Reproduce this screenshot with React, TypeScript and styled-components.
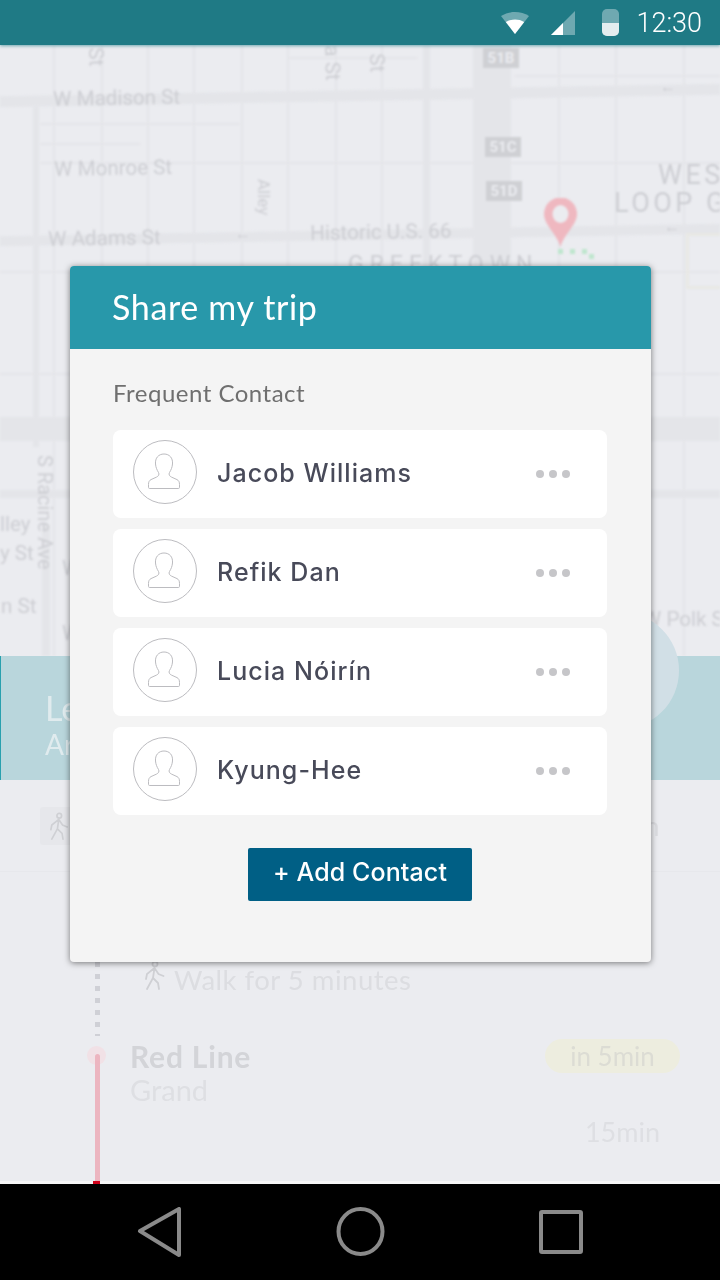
import React from "react";
import styled, { createGlobalStyle } from "styled-components";

const GlobalStyle = createGlobalStyle`
  html, body {
    margin: 0;
    padding: 0;
    background: #000;
  }
`;

const Page = styled.div`
  display: flex;
  flex-direction: column;
  position: relative;
  width: 720px;
  height: 1280px;
  overflow: hidden;
  font-family: Lato, "Liberation Sans", sans-serif;
`;

const StatusBar = styled.div`
  display: flex;
  align-items: center;
  justify-content: flex-end;
  flex: none;
  position: relative;
  z-index: 2;
  height: 45px;
  padding-right: 18px;
  background: #1f7a85;
  box-shadow: 0 1px 3px rgba(31, 122, 133, 0.6);
`;

const Clock = styled.span`
  margin-left: 17px;
  color: #fff;
  font-family: Roboto, sans-serif;
  font-size: 27px;
  font-weight: 300;
`;

const StatusIcon = styled.svg<{ $gap: number }>`
  display: block;
  margin-left: ${(p) => p.$gap}px;
`;

const Screen = styled.div`
  flex: 1;
  display: flex;
  flex-direction: column;
  position: relative;
  overflow: hidden;
  background: #ebecf0;
`;

const MapArea = styled.div`
  flex: none;
  position: relative;
  height: 611px;
  overflow: hidden;
  filter: blur(1px);
`;

const Road = styled.div<{ $x: number; $y: number; $w: number; $h: number; $angle?: number }>`
  position: absolute;
  left: ${(p) => p.$x}px;
  top: ${(p) => p.$y}px;
  width: ${(p) => p.$w}px;
  height: ${(p) => p.$h}px;
  background: #e4e5e9;
  transform: rotate(${(p) => p.$angle || 0}deg);
`;

const MapLabel = styled.span<{ $x: number; $y: number; $size?: number; $spacing?: number; $angle?: number }>`
  position: absolute;
  left: ${(p) => p.$x}px;
  top: ${(p) => p.$y}px;
  color: #cdced3;
  font-family: Roboto, sans-serif;
  font-size: ${(p) => p.$size || 20.6}px;
  line-height: 1;
  letter-spacing: ${(p) => p.$spacing || 0}px;
  white-space: nowrap;
  transform: rotate(${(p) => p.$angle || 0}deg);
  transform-origin: left top;
`;

const Shield = styled.span<{ $x: number; $y: number }>`
  position: absolute;
  left: ${(p) => p.$x}px;
  top: ${(p) => p.$y}px;
  width: 36px;
  height: 20px;
  background: #cfd0d4;
  color: #ebecf0;
  font-family: Roboto, sans-serif;
  font-size: 15px;
  font-weight: 700;
  line-height: 20px;
  text-align: center;
`;

const Building = styled.div`
  position: absolute;
  left: 686px;
  top: 188px;
  width: 50px;
  height: 50px;
  border: 3px solid #e8e8e4;
`;

const MapPin = styled.svg`
  position: absolute;
  left: 544px;
  top: 153px;
`;

const RouteDot = styled.span<{ $x: number; $y: number }>`
  position: absolute;
  left: ${(p) => p.$x}px;
  top: ${(p) => p.$y}px;
  width: 5px;
  height: 5px;
  background: #bfe6ce;
`;

const Banner = styled.div`
  flex: none;
  box-sizing: border-box;
  height: 124px;
  padding: 33px 0 0 44px;
  background: #b9d6dc;
  border-left: 1px solid #29a0ae;
  color: #e0ebee;
  filter: blur(0.7px);
`;

const BannerTitle = styled.div`
  font-size: 34px;
  line-height: 38px;
`;

const BannerSub = styled.div`
  font-size: 28px;
  line-height: 34px;
`;

const BannerCircle = styled.div`
  position: absolute;
  left: 562px;
  top: 567px;
  width: 117px;
  height: 117px;
  border-radius: 50%;
  background: #d1dfe6;
  filter: blur(0.6px);
`;

const Steps = styled.div`
  flex: 1;
  display: flex;
  flex-direction: column;
  filter: blur(0.7px);
`;

const ChipRow = styled.div`
  display: flex;
  align-items: center;
  justify-content: space-between;
  flex: none;
  box-sizing: border-box;
  height: 92px;
  padding: 0 60px 0 40px;
  border-bottom: 1px solid #e7e8ec;
`;

const WalkChip = styled.div`
  display: flex;
  align-items: center;
  justify-content: center;
  width: 38px;
  height: 38px;
  border-radius: 3px;
  background: #e6e7eb;
`;

const Leg = styled.div<{ $height: number; $top: number }>`
  display: flex;
  flex: none;
  height: ${(p) => p.$height}px;
  margin-top: ${(p) => p.$top}px;
`;

const Rail = styled.div`
  display: flex;
  flex-direction: column;
  align-items: flex-start;
  flex: none;
  position: relative;
  box-sizing: border-box;
  width: 130px;
  padding-left: 95px;
`;

const DottedLine = styled.div`
  width: 4.5px;
  height: 74px;
  margin-top: 2px;
  background: repeating-linear-gradient(to bottom, #cfd0d6 0 5px, transparent 5px 12px);
`;

const RedLine = styled.div`
  flex: 1;
  position: relative;
  z-index: 1;
  width: 5px;
  margin-top: 6px;
  border-radius: 3px 3px 0 0;
  background: #ecb5c0;
`;

const RedDot = styled.div`
  position: absolute;
  left: 87px;
  top: -2px;
  width: 19px;
  height: 19px;
  border-radius: 50%;
  background: #f1e1e6;
`;

const WalkInfo = styled.div`
  display: flex;
  align-items: flex-start;
  gap: 9px;
  margin-left: 14px;
`;

const WalkText = styled.span`
  color: #dcdde1;
  font-size: 27.5px;
  line-height: 40px;
  letter-spacing: 0.5px;
`;

const LineInfo = styled.div`
  display: flex;
  flex-direction: column;
  flex: 1;
  margin-top: -9px;
`;

const LineTitle = styled.span`
  color: #d3d4d8;
  font-size: 30px;
  font-weight: 700;
  line-height: 34px;
  letter-spacing: 0.8px;
`;

const LineStop = styled.span`
  color: #dedfe3;
  font-size: 29px;
  line-height: 34px;
`;

const Timing = styled.div`
  display: flex;
  flex-direction: column;
  align-items: flex-end;
  margin-top: -9px;
  padding-right: 40px;
`;

const Pill = styled.span`
  box-sizing: border-box;
  width: 135px;
  height: 34px;
  border-radius: 17px;
  background: #ededdf;
  color: #dcdcd4;
  font-size: 26px;
  line-height: 34px;
  text-align: center;
`;

const Duration = styled.span`
  margin-top: 42px;
  margin-right: 20px;
  color: #dedfe3;
  font-size: 27px;
  line-height: 34px;
`;

const BottomEdge = styled.div`
  display: flex;
  flex: none;
  height: 3px;
  padding-left: 93px;
  background: #f6f6f7;
`;

const RedTip = styled.div`
  width: 7px;
  background: #d0021b;
`;

const Modal = styled.div`
  position: absolute;
  left: 70px;
  top: 266px;
  z-index: 3;
  width: 581px;
  height: 696px;
  border-radius: 4px;
  overflow: hidden;
  background: #f4f4f4;
  box-shadow: 0 1px 6px rgba(0, 0, 0, 0.5);
`;

const ModalHeader = styled.div`
  display: flex;
  align-items: center;
  height: 83px;
  padding-left: 42px;
  padding-bottom: 2px;
  box-sizing: border-box;
  background: #2898aa;
  color: #fff;
  font-size: 34px;
  letter-spacing: 0.65px;
`;

const ModalBody = styled.div`
  display: flex;
  flex-direction: column;
  padding: 29px 44px 0 43px;
`;

const SectionLabel = styled.div`
  margin-bottom: 22px;
  color: #6f6f6f;
  font-size: 24px;
  line-height: 30px;
  letter-spacing: 0.5px;
`;

const ContactList = styled.div`
  display: flex;
  flex-direction: column;
  gap: 11px;
`;

const ContactRow = styled.div`
  display: flex;
  align-items: center;
  height: 88px;
  padding: 0 37px 3px 20px;
  box-sizing: border-box;
  border-radius: 8px;
  background: #fff;
`;

const AvatarIcon = styled.svg`
  flex: none;
  margin-bottom: 1px;
`;

const ContactName = styled.span`
  flex: 1;
  margin-left: 20px;
  color: #484a59;
  font-family: Inter, sans-serif;
  font-size: 25px;
  font-weight: 500;
  letter-spacing: 1.05px;
`;

const Dots = styled.div`
  display: flex;
  gap: 5px;
  margin-top: 2px;
`;

const Dot = styled.span`
  width: 8px;
  height: 8px;
  border-radius: 50%;
  background: #c6c6c9;
`;

const AddButton = styled.button`
  align-self: center;
  width: 224px;
  height: 53px;
  margin-top: 33px;
  padding: 0 0 5px;
  border: 0;
  border-radius: 2px;
  background: #005f85;
  color: #fff;
  font-family: Inter, sans-serif;
  font-size: 25px;
  font-weight: 500;
  letter-spacing: 0.1px;
`;

const NavBar = styled.div`
  display: grid;
  grid-template-columns: repeat(3, 1fr);
  flex: none;
  height: 96px;
  background: #000;
`;

const NavSlot = styled.div<{ $justify: string; $pad: number }>`
  display: flex;
  align-items: center;
  justify-content: ${(p) => p.$justify};
  padding: 0 ${(p) => p.$pad}px;
`;

const contacts = ["Jacob Williams", "Refik Dan", "Lucia Nóirín", "Kyung-Hee"];

const roads = [
  { x: -5, y: 45, w: 730, h: 11, angle: -1 },
  { x: -5, y: 185, w: 730, h: 10, angle: -1 },
  { x: 0, y: 372, w: 720, h: 24 },
  { x: 0, y: 445, w: 720, h: 8 },
  { x: 473, y: 0, w: 38, h: 611 },
  { x: 423, y: 0, w: 7, h: 611 },
  { x: 33, y: 62, w: 6, h: 340 },
  { x: 42, y: 480, w: 8, h: 131 },
  { x: 0, y: 328, w: 720, h: 1.5 },
  { x: 0, y: 226, w: 720, h: 1.5 },
  { x: 40, y: 78, w: 200, h: 1.5 },
  { x: 40, y: 98, w: 100, h: 1.5 },
  { x: 40, y: 117, w: 680, h: 1.5 },
  { x: 287, y: 12, w: 130, h: 1.5 },
  { x: 515, y: 30, w: 205, h: 1.5 },
  { x: 53, y: 0, w: 1.5, h: 611 },
  { x: 101, y: 0, w: 1.5, h: 611 },
  { x: 147, y: 0, w: 1.5, h: 611 },
  { x: 193, y: 0, w: 1.5, h: 611 },
  { x: 241, y: 0, w: 1.5, h: 611 },
  { x: 287, y: 0, w: 1.5, h: 611 },
  { x: 335, y: 0, w: 1.5, h: 611 },
  { x: 381, y: 0, w: 1.5, h: 611 },
  { x: 558, y: 0, w: 1.5, h: 611 },
  { x: 615, y: 0, w: 1.5, h: 611 },
  { x: 683, y: 0, w: 1.5, h: 611 },
];

const labels = [
  { text: "W Madison St", x: 53, y: 44, angle: -1 },
  { text: "W Monroe St", x: 54, y: 114, angle: -1 },
  { text: "W Adams St", x: 48, y: 184, angle: -1 },
  { text: "Historic U.S. 66", x: 310, y: 178, angle: -1 },
  { text: "GREEKTOWN", x: 348, y: 208, size: 23, spacing: 6 },
  { text: "WES", x: 658, y: 117, size: 27, spacing: 3.5 },
  { text: "LOOP G", x: 614, y: 145, size: 27, spacing: 3.5 },
  { text: "Alley", x: 272, y: 134, size: 17, angle: 90 },
  { text: "S Racine Ave", x: 55, y: 410, size: 20, angle: 90 },
  { text: "St", x: 106, y: 2, angle: 88 },
  { text: "a St", x: 342, y: 0, angle: 88 },
  { text: "St", x: 387, y: 8, angle: 88 },
  { text: "lley", x: 0, y: 469 },
  { text: "y St", x: 0, y: 498 },
  { text: "n St", x: 1, y: 551 },
  { text: "W", x: 62, y: 513 },
  { text: "W", x: 62, y: 578 },
  { text: "W Polk St", x: 643, y: 564 },
  { text: "←", x: 660, y: 34, size: 16 },
  { text: "←", x: 235, y: 181, size: 16 },
  { text: "←", x: 664, y: 174, size: 16 },
];

const shields = [
  { text: "51B", x: 483, y: 3 },
  { text: "51C", x: 485, y: 92 },
  { text: "51D", x: 486, y: 136 },
];

const routeDots = [
  { x: 558, y: 204 },
  { x: 570, y: 204 },
  { x: 582, y: 204 },
  { x: 589, y: 209 },
];

const Avatar = () => (
  <AvatarIcon width="64" height="64" viewBox="0 0 64 64" fill="none" stroke="#bcbcc0" strokeWidth="1">
    <circle cx="32" cy="32" r="31.5" />
    <path
      transform="translate(-1 0)"
      d="M23.5 24c-.5-6 3-10 8.500-10s9 4 8.500 10c-.3 3.500-1.500 6-3 8.500-1.200 2 .2 3.800 2 4.600l5.500 2.500c1.800.9 2.500 2.500 2.500 4.800v3c0 .8-.5 1.100-1.200 1.100H17.700c-.7 0-1.200-.3-1.200-1.100v-3c0-2.300.7-3.900 2.500-4.800l5.500-2.500c1.800-.8 3.200-2.600 2-4.600-1.500-2.500-2.700-5-3-8.500z"
    />
  </AvatarIcon>
);

const Walker = ({ size }: { size: number }) => (
  <svg width={size * 0.7} height={size} viewBox="0 0 21 30" fill="none" stroke="#cfd0d4" strokeWidth="1.800" strokeLinecap="round">
    <circle cx="11" cy="4" r="2.500" />
    <path d="M10.500 8 9 18l-6 11M9 18l5 5 1 6M10.500 8 3 14l-1 5M10.500 8l4 6 5 2" />
  </svg>
);

export default function App() {
  return (
    <Page>
      <GlobalStyle />
      <StatusBar>
        <StatusIcon width="28" height="22" viewBox="0 0 28 22" $gap={0}>
          <path d="M14 22 0 4c8-5.300 20-5.300 28 0z" fill="#6fa9b1" />
          <path d="M14 22 4.800 10c5.500-3.300 13-3.300 18.400 0z" fill="#fff" />
        </StatusIcon>
        <StatusIcon width="24" height="24" viewBox="0 0 24 24" $gap={22}>
          <path d="M0 24 24 0v24z" fill="#6fa9b1" />
          <path d="M0 24 12 12v12z" fill="#fff" />
        </StatusIcon>
        <StatusIcon width="17" height="27" viewBox="0 0 17 27" $gap={27}>
          <rect width="17" height="27" rx="5" fill="#6fa9b1" />
          <path d="M0 14h17v8a5 5 0 0 1-5 5H5a5 5 0 0 1-5-5z" fill="#e4edef" />
        </StatusIcon>
        <Clock>12:30</Clock>
      </StatusBar>
      <Screen>
        <MapArea>
          {roads.map((r, i) => (
            <Road key={i} $x={r.x} $y={r.y} $w={r.w} $h={r.h} $angle={r.angle} />
          ))}
          <Building />
          {labels.map((l, i) => (
            <MapLabel key={i} $x={l.x} $y={l.y} $size={l.size} $spacing={l.spacing} $angle={l.angle}>
              {l.text}
            </MapLabel>
          ))}
          {shields.map((s) => (
            <Shield key={s.text} $x={s.x} $y={s.y}>
              {s.text}
            </Shield>
          ))}
          <MapPin width="33" height="50" viewBox="0 0 33 50">
            <path d="M16.500 49C13 36 0 27 0 16a16.500 16.500 0 0 1 33 0c0 11-13 20-16.500 33z" fill="#efb8c0" />
            <ellipse cx="16.500" cy="16" rx="8" ry="9" fill="#ebecf0" />
          </MapPin>
          {routeDots.map((d) => (
            <RouteDot key={d.x} $x={d.x} $y={d.y} />
          ))}
        </MapArea>
        <Banner>
          <BannerTitle>Leave</BannerTitle>
          <BannerSub>Arrive</BannerSub>
        </Banner>
        <BannerCircle />
        <Steps>
          <ChipRow>
            <WalkChip>
              <Walker size={28} />
            </WalkChip>
            <WalkText>10min</WalkText>
          </ChipRow>
          <Leg $height={88} $top={88}>
            <Rail>
              <DottedLine />
            </Rail>
            <WalkInfo>
              <Walker size={30} />
              <WalkText>Walk for 5 minutes</WalkText>
            </WalkInfo>
          </Leg>
          <Leg $height={133} $top={0}>
            <Rail>
              <RedDot />
              <RedLine />
            </Rail>
            <LineInfo>
              <LineTitle>Red Line</LineTitle>
              <LineStop>Grand</LineStop>
            </LineInfo>
            <Timing>
              <Pill>in 5min</Pill>
              <Duration>15min</Duration>
            </Timing>
          </Leg>
          <BottomEdge>
            <RedTip />
          </BottomEdge>
        </Steps>
      </Screen>
      <NavBar>
        <NavSlot $justify="flex-start" $pad={137}>
          <svg width="46" height="50" viewBox="0 0 46 50" fill="none" stroke="#8a8a8a" strokeWidth="4" strokeLinejoin="round">
            <path d="M3 24 42 2v46z" />
          </svg>
        </NavSlot>
        <NavSlot $justify="center" $pad={0}>
          <svg width="52" height="50" viewBox="0 0 52 50" fill="none" stroke="#8a8a8a" strokeWidth="4">
            <ellipse cx="25.500" cy="24.500" rx="22" ry="22.500" />
          </svg>
        </NavSlot>
        <NavSlot $justify="flex-end" $pad={137}>
          <svg width="44" height="44" viewBox="0 0 44 44" fill="none" stroke="#8a8a8a" strokeWidth="4" strokeLinejoin="round">
            <rect x="2" y="2" width="40" height="40" rx="1" />
          </svg>
        </NavSlot>
      </NavBar>
      <Modal>
        <ModalHeader>Share my trip</ModalHeader>
        <ModalBody>
          <SectionLabel>Frequent Contact</SectionLabel>
          <ContactList>
            {contacts.map((name) => (
              <ContactRow key={name}>
                <Avatar />
                <ContactName>{name}</ContactName>
                <Dots>
                  <Dot />
                  <Dot />
                  <Dot />
                </Dots>
              </ContactRow>
            ))}
          </ContactList>
          <AddButton>+ Add Contact</AddButton>
        </ModalBody>
      </Modal>
    </Page>
  );
}
